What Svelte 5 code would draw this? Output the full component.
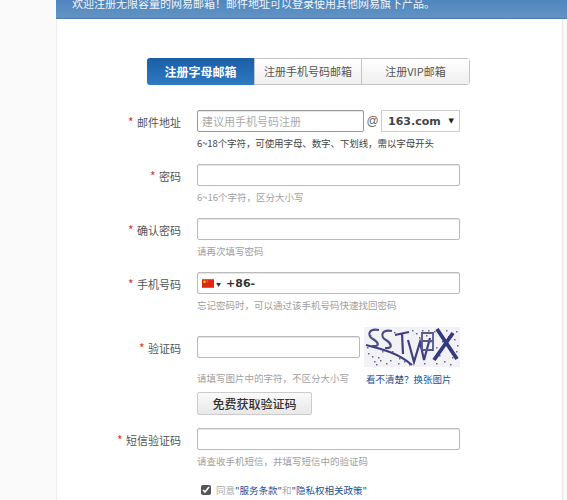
<script>
  const tabs = ['注册字母邮箱', '注册手机号码邮箱', '注册VIP邮箱'];
  const noise = [
    [6, 8], [14, 30], [22, 36], [30, 5], [40, 34], [52, 6], [62, 8], [70, 4], [78, 14], [84, 9],
    [88, 30], [80, 34], [10, 34], [18, 24], [66, 14], [72, 20], [58, 3], [45, 37], [35, 31], [92, 24],
    [4, 26], [8, 29], [12, 37], [26, 33], [48, 3], [55, 10], [76, 8], [90, 12], [93, 18], [86, 37],
    [72, 36], [60, 36], [3, 20], [28, 24], [34, 36], [16, 33], [64, 3], [82, 3], [92, 4], [75, 28]
  ];
</script>

<div class="page">
  <div class="panel">
    <div class="banner">欢迎注册无限容量的网易邮箱！邮件地址可以登录使用其他网易旗下产品。</div>

    <div class="tabs">
      {#each tabs as tab, i}
        <div class="tab" class:active={i === 0}>{tab}</div>
      {/each}
    </div>

    <form class="form">
      <div class="row">
        <label class="label"><i>*</i> 邮件地址</label>
        <div class="field">
          <div class="line">
            <input class="input short" placeholder="建议用手机号码注册" />
            <span class="at">@</span>
            <div class="domain">163.com <span class="caret">▼</span></div>
          </div>
          <p class="hint dark">6~18个字符，可使用字母、数字、下划线，需以字母开头</p>
        </div>
      </div>

      <div class="row">
        <label class="label"><i>*</i> 密码</label>
        <div class="field">
          <input class="input" />
          <p class="hint">6~16个字符，区分大小写</p>
        </div>
      </div>

      <div class="row">
        <label class="label"><i>*</i> 确认密码</label>
        <div class="field">
          <input class="input" />
          <p class="hint">请再次填写密码</p>
        </div>
      </div>

      <div class="row">
        <label class="label"><i>*</i> 手机号码</label>
        <div class="field">
          <div class="input phone">
            <svg class="flag" width="12" height="9" viewBox="0 0 14 10">
              <rect width="14" height="10" fill="#de2910" />
              <circle cx="3" cy="3" r="1.4" fill="#ffde00" />
              <circle cx="6" cy="1.6" r=".5" fill="#ffde00" />
              <circle cx="6.6" cy="3.2" r=".5" fill="#ffde00" />
            </svg>
            <span class="mini">▼</span>
            <b>+86-</b>
          </div>
          <p class="hint">忘记密码时，可以通过该手机号码快速找回密码</p>
        </div>
      </div>

      <div class="row captcha">
        <label class="label"><i>*</i> 验证码</label>
        <div class="field">
          <div class="captcha-line">
            <div class="captcha-left">
              <input class="input code" />
              <p class="hint">请填写图片中的字符，不区分大小写</p>
            </div>
            <div class="captcha-right">
              <svg class="captcha-img" width="96" height="40" viewBox="0 0 96 40">
                <rect width="96" height="40" fill="#f1f1f6" />
                {#each noise as [x, y]}
                  <rect {x} {y} width="1.5" height="1.5" fill="#66688a" />
                {/each}
                <path d="M15 3 C4 1 3 9 9 12 C14 15 17 20 8 19 M28 4 C17 2 16 10 22 13 C27 16 30 22 21 21" fill="none" stroke="#4b4c84" stroke-width="2.2" />
                <path d="M2 18 C18 22 34 26 48 38 M31 8 L45 5 M38 6 L39 27 M44 13 L50 35 L56 15 L60 33 L66 11" fill="none" stroke="#3e4080" stroke-width="2.2" />
                <path d="M58 6 L69 6 L69 23 L58 23 Z M58 14 L69 14" fill="none" stroke="#55578f" stroke-width="1.8" />
                <path d="M73 2 L93 32 M89 6 L70 33" fill="none" stroke="#34387f" stroke-width="3.8" />
              </svg>
              <a class="refresh" href="#top">看不清楚？换张图片</a>
            </div>
          </div>
        </div>
      </div>

      <div class="send-row">
        <button class="send" type="button">免费获取验证码</button>
      </div>

      <div class="row sms">
        <label class="label"><i>*</i> 短信验证码</label>
        <div class="field">
          <input class="input" />
          <p class="hint">请查收手机短信，并填写短信中的验证码</p>
        </div>
      </div>

      <div class="agree">
        <input type="checkbox" checked />
        <span>同意<a href="#top">"服务条款"</a>和<a href="#top">"隐私权相关政策"</a></span>
      </div>
    </form>
  </div>
</div>

<style>
  :global(body) {
    margin: 0;
    background: #fafafa;
    overflow: hidden;
  }

  .page {
    height: 500px;
    overflow: hidden;
    padding-left: 56px;
    font-family: "Noto Sans CJK SC", "Liberation Sans", sans-serif;
    font-size: 12px;
    color: #555;
  }

  .panel {
    background: #fff;
    width: 505px;
    height: 500px;
    border-left: 1px solid #eee;
    border-right: 1px solid #e6e6e6;
  }

  .banner {
    height: 19px;
    margin-left: -1px;
    margin-right: -7px;
    padding-left: 16px;
    background: linear-gradient(#4f86bd, #6293c4);
    border-bottom: 1px solid #4a7cae;
    box-sizing: border-box;
    color: #f2f6fb;
    font-size: 11px;
    line-height: 6px;
    white-space: nowrap;
  }

  .tabs {
    display: flex;
    width: 323px;
    height: 27px;
    margin: 39px 0 0 90px;
    box-sizing: border-box;
    border: 1px solid #c4c4c4;
    border-radius: 3px;
  }

  .tab {
    width: 107px;
    line-height: 25px;
    text-align: center;
    background: linear-gradient(#fff, #efefef);
    border-left: 1px solid #c4c4c4;
    box-sizing: border-box;
    color: #555;
    font-size: 11px;
  }

  .tab:last-child {
    flex: 1;
  }

  .tab.active {
    margin: -1px 0 -1px -1px;
    line-height: 27px;
    border: 0;
    border-radius: 3px 0 0 3px;
    background: linear-gradient(#1a5ea6, #2f7ac2);
    color: #fff;
    font-size: 12px;
    font-weight: 700;
  }

  .form {
    margin-top: 25px;
  }

  .row {
    display: flex;
    margin-bottom: 7px;
  }

  .label {
    width: 140px;
    flex: none;
    padding: 1px 16px 0 0;
    box-sizing: border-box;
    text-align: right;
    line-height: 22px;
    font-size: 11px;
    color: #555;
  }

  .label i {
    font-style: normal;
    font-size: 12px;
    margin-right: 1px;
    color: #d33;
  }

  .field {
    flex: none;
    width: 263px;
  }

  .input {
    display: block;
    width: 263px;
    height: 22px;
    box-sizing: border-box;
    padding: 0 4px;
    border: 1px solid #bbb;
    border-radius: 2px;
    background: #fff;
    box-shadow: inset 0 1px 1px #e4e4e4;
    font-family: inherit;
    font-size: 11px;
    outline: none;
  }

  .input::placeholder {
    color: #aaa;
  }

  .line {
    display: flex;
    align-items: center;
  }

  .short {
    width: 167px;
    border-color: #999;
  }

  .at {
    width: 17px;
    text-align: center;
    font-family: "Liberation Sans", sans-serif;
    font-size: 12px;
    color: #666;
  }

  .domain {
    display: flex;
    justify-content: space-between;
    align-items: center;
    width: 79px;
    height: 22px;
    box-sizing: border-box;
    padding: 0 5px 0 6px;
    border: 1px solid #ccc;
    font-family: "DejaVu Sans", sans-serif;
    font-weight: 700;
    font-size: 11px;
    color: #444;
  }

  .caret {
    font-size: 7px;
    color: #222;
  }

  .hint {
    margin: 0;
    padding-top: 3px;
    height: 25px;
    box-sizing: border-box;
    line-height: 16px;
    font-size: 9.5px;
    color: #a0a0a0;
    white-space: nowrap;
  }

  .hint.dark {
    color: #444;
    letter-spacing: -0.1px;
  }

  .phone {
    display: flex;
    align-items: center;
    padding-left: 4px;
  }

  .flag {
    flex: none;
  }

  .mini {
    margin: 0 5px 0 2px;
    font-size: 5px;
    color: #333;
  }

  .phone b {
    font-family: "DejaVu Sans", sans-serif;
    font-size: 11px;
    color: #333;
  }

  .captcha {
    margin: 17px 0 0;
  }

  .captcha-line {
    display: flex;
    justify-content: space-between;
    margin-top: -9px;
  }

  .captcha-left {
    padding-top: 9px;
  }

  .code {
    width: 163px;
  }

  .captcha-left .hint {
    height: 29px;
    padding-top: 12px;
  }

  .captcha-img {
    display: block;
  }

  .refresh {
    display: block;
    margin-top: 5px;
    padding-left: 2px;
    font-size: 9.5px;
    line-height: 14px;
    color: #1a4f96;
    text-decoration: none;
    white-space: nowrap;
  }

  .send-row {
    padding-left: 140px;
    margin-top: 5px;
  }

  .send {
    display: block;
    width: 115px;
    height: 23px;
    padding: 0;
    border: 1px solid #ccc;
    border-radius: 2px;
    background: linear-gradient(#fafafa, #e8e8e8);
    font-family: inherit;
    font-size: 12px;
    font-weight: 500;
    color: #333;
  }

  .sms {
    margin: 13px 0 0;
  }

  .agree {
    display: flex;
    align-items: center;
    margin-top: 8px;
    padding-left: 144px;
    font-size: 9.5px;
    line-height: 14px;
    color: #aaa;
  }

  .agree input {
    width: 10px;
    height: 10px;
    margin: 0 5px 0 0;
    accent-color: #555;
  }

  .agree a {
    color: #1a4f96;
    text-decoration: none;
  }
</style>
